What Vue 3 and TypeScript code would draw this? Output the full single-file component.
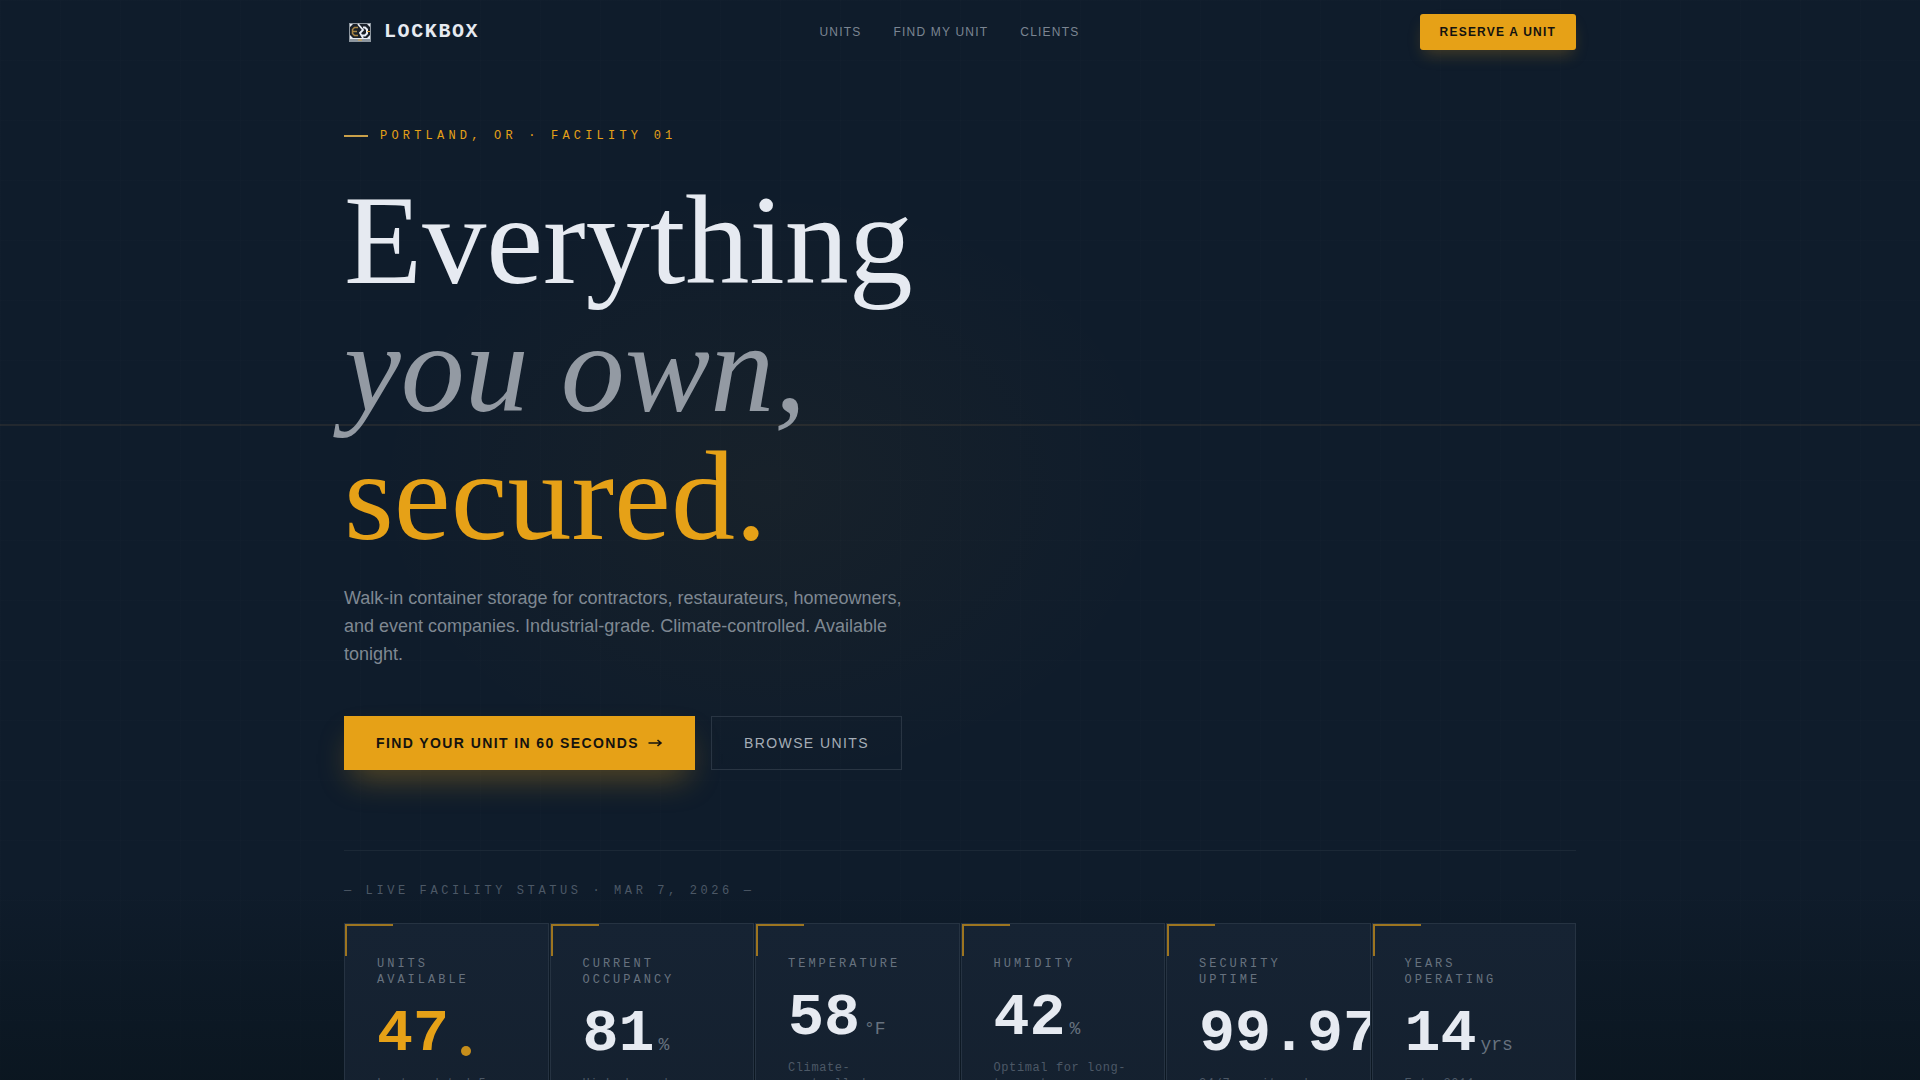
<script setup lang="ts">
interface Stat {
  label: string
  value: string
  unit?: string
  note: string
  live?: boolean
}

const links: { text: string; href: string }[] = [
  { text: 'UNITS', href: '#units' },
  { text: 'FIND MY UNIT', href: '#finder' },
  { text: 'CLIENTS', href: '#clients' },
]

const stats: Stat[] = [
  { label: 'UNITS AVAILABLE', value: '47', note: 'Last updated 5 min ago', live: true },
  { label: 'CURRENT OCCUPANCY', value: '81', unit: '%', note: 'High demand' },
  { label: 'TEMPERATURE', value: '58', unit: '°F', note: 'Climate-controlled' },
  { label: 'HUMIDITY', value: '42', unit: '%', note: 'Optimal for long-term storage' },
  { label: 'SECURITY UPTIME', value: '99.97', unit: '%', note: '24/7 monitored' },
  { label: 'YEARS OPERATING', value: '14', unit: 'yrs', note: 'Est. 2011' },
]
</script>

<template>
  <div class="page">
    <div class="backdrop" aria-hidden="true">
      <div class="scanline"></div>
    </div>

    <header class="header">
      <div class="container header-row">
        <a class="brand" href="#">
          <svg class="brand-icon" viewBox="0 0 32 32" aria-hidden="true">
            <rect x="5" y="7" width="22" height="19" fill="#8d969f" />
            <rect x="6" y="8" width="20" height="14" fill="#1a2029" />
            <path d="M6 8h3L6 11zM26 8h-3l3 3zM6 22v-3l3 3zM26 22v-3l-3 3z" fill="#e8ecf4" />
            <path d="M14 11.500h-3.500l-2 2v4l2 2h3.500M9 15.500h4" fill="none" stroke="#a98645" stroke-width="1.500" />
            <path d="M19 11.500h2l2 2v4L21 19.500h-3" fill="none" stroke="#e8ecf4" stroke-width="2" />
            <path d="M14 8l5 6-3 3 3 5" fill="none" stroke="#e8ecf4" stroke-width="1.800" />
            <path d="M23 15.500h3M15 23v2M17 23v2" stroke="#e0a63a" stroke-width="1" />
            <path d="M6 22.500h20" stroke="#e8ecf4" stroke-width="1" />
          </svg>
          <span>LOCKBOX</span>
        </a>
        <nav class="nav">
          <a v-for="link in links" :key="link.text" :href="link.href">{{ link.text }}</a>
        </nav>
        <button class="reserve" type="button">RESERVE A UNIT</button>
      </div>
    </header>

    <main class="container hero">
      <p class="eyebrow">PORTLAND, OR · FACILITY 01</p>
      <h1 class="title">
        <span>Everything</span>
        <em>you own,</em>
        <span class="accent">secured.</span>
      </h1>
      <p class="lead">
        Walk-in container storage for contractors, restaurateurs, homeowners, and event companies.
        Industrial-grade. Climate-controlled. Available tonight.
      </p>
      <div class="actions">
        <button class="primary" type="button">
          FIND YOUR UNIT IN 60 SECONDS
          <svg viewBox="0 0 16 16" width="16" height="16" aria-hidden="true">
            <path d="M1.500 8h12.500M10.500 5L14 8l-3.500 3" fill="none" stroke="currentColor" stroke-width="1.600" />
          </svg>
        </button>
        <button class="secondary" type="button">BROWSE UNITS</button>
      </div>

      <section class="status">
        <h2 class="status-title">— LIVE FACILITY STATUS · MAR 7, 2026 —</h2>
        <div class="cards">
          <article v-for="stat in stats" :key="stat.label" class="card">
            <h3 class="card-label">{{ stat.label }}</h3>
            <div class="reading">
              <span class="value" :class="{ accent: stat.live }">{{ stat.value }}</span>
              <span v-if="stat.unit" class="unit">{{ stat.unit }}</span>
              <span v-if="stat.live" class="pulse"></span>
            </div>
            <p class="note">{{ stat.note }}</p>
          </article>
        </div>
      </section>
    </main>
  </div>
</template>

<style>
body {
  margin: 0;
  background: #0f1c2b;
}
</style>

<style scoped>
.page {
  --amber: #e6a117;
  --ink: #e6eaf1;
  --mono: "Liberation Mono", "Courier New", monospace;
  position: relative;
  height: 100vh;
  overflow: hidden;
  background: #0f1c2b;
  color: var(--ink);
  font-family: "Liberation Sans", Arial, sans-serif;
}

h1,
h2,
h3,
p {
  margin: 0;
  font-weight: 400;
}

button {
  border: 0;
  font-family: inherit;
  cursor: pointer;
}

a {
  color: inherit;
  text-decoration: none;
}

.backdrop {
  position: absolute;
  inset: 0;
  background:
    linear-gradient(to bottom, transparent 82%, rgba(9, 20, 28, 0.7)),
    radial-gradient(ellipse 400px 300px at 768px 486px, rgba(230, 161, 23, 0.04), transparent),
    repeating-linear-gradient(to right, rgba(255, 255, 255, 0.008) 0 1px, transparent 1px 60px),
    repeating-linear-gradient(to bottom, rgba(255, 255, 255, 0.008) 0 1px, transparent 1px 60px);
}

.scanline {
  position: absolute;
  top: 424px;
  left: 0;
  right: 0;
  height: 2px;
  background: rgba(230, 170, 90, 0.09);
}

.container {
  position: relative;
  box-sizing: border-box;
  max-width: 1280px;
  margin: 0 auto;
  padding: 0 24px;
}

.header-row {
  display: flex;
  align-items: center;
  justify-content: space-between;
  height: 64px;
}

.brand {
  display: flex;
  align-items: center;
  gap: 8px;
  font: 700 20px/32px var(--mono);
  letter-spacing: 0.08em;
}

.brand-icon {
  width: 32px;
  height: 32px;
}

.nav {
  display: flex;
  gap: 32px;
  color: #7b8592;
  font-size: 12px;
  line-height: 16px;
  letter-spacing: 0.1em;
}

.reserve {
  padding: 10px 20px;
  border-radius: 3px;
  background: var(--amber);
  box-shadow: 0 8px 16px -4px rgba(230, 161, 23, 0.25);
  color: #14130f;
  font-size: 12px;
  font-weight: 700;
  line-height: 16px;
  letter-spacing: 0.1em;
}

.hero {
  padding-top: 64px;
}

.eyebrow {
  display: flex;
  align-items: center;
  gap: 12px;
  color: var(--amber);
  font: 12px/16px var(--mono);
  letter-spacing: 0.35em;
}

.eyebrow::before {
  width: 24px;
  height: 2px;
  background: #c9a04a;
  content: "";
}

.title {
  margin-top: 32px;
  font: 400 128px/128px "Liberation Serif", "Times New Roman", serif;
}

.title > * {
  display: block;
}

.title em {
  color: #939aa3;
}

.accent,
.title .accent {
  color: var(--amber);
}

.lead {
  max-width: 576px;
  margin-top: 24px;
  color: #7f8892;
  font-size: 18px;
  line-height: 28px;
}

.actions {
  display: flex;
  gap: 16px;
  margin-top: 48px;
}

.primary,
.secondary {
  font-size: 14px;
  line-height: 22px;
  letter-spacing: 0.1em;
}

.primary {
  display: flex;
  align-items: center;
  gap: 8px;
  padding: 16px 32px;
  background: var(--amber);
  box-shadow: 0 16px 32px -8px rgba(230, 161, 23, 0.35);
  color: #14130f;
  font-weight: 700;
}

.secondary {
  padding: 15px 32px;
  border: 1px solid #293543;
  background: transparent;
  color: #a5adb7;
}

.status {
  margin-top: 80px;
  padding-top: 32px;
  border-top: 1px solid #1b2836;
}

.status-title {
  color: #4c5866;
  font: 12px/16px var(--mono);
  letter-spacing: 0.3em;
}

.cards {
  display: grid;
  grid-template-columns: repeat(6, minmax(0, 1fr));
  gap: 1px;
  margin-top: 24px;
}

.card {
  position: relative;
  overflow: hidden;
  padding: 32px;
  border: 1px solid #263342;
  background: linear-gradient(to bottom, #162333, #14202e);
}

.card::before {
  position: absolute;
  top: 0;
  left: 0;
  box-sizing: border-box;
  width: 48px;
  height: 32px;
  border-top: 2px solid var(--amber);
  border-left: 2px solid var(--amber);
  opacity: 0.65;
  content: "";
}

.card-label {
  color: #67727f;
  font: 12px/16px var(--mono);
  letter-spacing: 0.25em;
}

.reading {
  display: flex;
  align-items: baseline;
  gap: 4px;
  margin-top: 16px;
  font-family: var(--mono);
  white-space: nowrap;
}

.value {
  font-size: 60px;
  font-weight: 700;
  line-height: 60px;
}

.unit {
  color: #67727f;
  font-size: 18px;
  line-height: 28px;
}

.pulse {
  align-self: flex-end;
  width: 10px;
  height: 10px;
  margin: 0 0 8px 8px;
  border-radius: 50%;
  background: var(--amber);
  opacity: 0.85;
}

.note {
  margin-top: 12px;
  color: #4c5866;
  font: 12px/16px var(--mono);
  letter-spacing: 0.05em;
}
</style>
